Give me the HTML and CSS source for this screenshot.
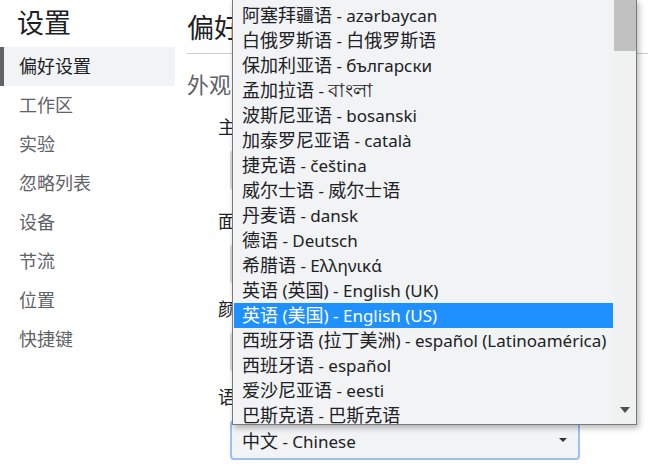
FILE: index.html
```html
<!DOCTYPE html>
<html lang="zh-CN">
<head>
<meta charset="utf-8">
<title>设置</title>
<link rel="stylesheet" href="styles.css">
</head>
<body>
<div class="app">
  <aside class="sidebar">
    <div class="sidebar-title">设置</div>
    <nav class="nav">
      <div class="nav-item active">偏好设置</div>
      <div class="nav-item">工作区</div>
      <div class="nav-item">实验</div>
      <div class="nav-item">忽略列表</div>
      <div class="nav-item">设备</div>
      <div class="nav-item">节流</div>
      <div class="nav-item">位置</div>
      <div class="nav-item">快捷键</div>
    </nav>
  </aside>
  <main class="content">
    <div class="content-header"><h2 class="content-title">偏好设置</h2></div>
    <h3 class="section-title">外观</h3>
    <div class="setting first">
      <div class="setting-label">主题：</div>
      <div class="select"><span>系统偏好设置</span><span class="caret"></span></div>
    </div>
    <div class="setting">
      <div class="setting-label">面板布局：</div>
      <div class="select"><span>自动</span><span class="caret"></span></div>
    </div>
    <div class="setting">
      <div class="setting-label">颜色格式：</div>
      <div class="select"><span>按原样设置</span><span class="caret"></span></div>
    </div>
    <div class="setting">
      <div class="setting-label">语言：</div>
      <div class="select focused"><span><span class="zh">中文</span> - Chinese</span><span class="caret"></span></div>
    </div>
  </main>
</div>

<div class="dropdown">
  <div class="dropdown-list">
    <div class="option"><span class="zh">阿塞拜疆语</span> - azərbaycan</div>
    <div class="option"><span class="zh">白俄罗斯语</span> - <span class="zh">白俄罗斯语</span></div>
    <div class="option"><span class="zh">保加利亚语</span> - български</div>
    <div class="option"><span class="zh">孟加拉语</span> - <span class="bn">বাংলা</span></div>
    <div class="option"><span class="zh">波斯尼亚语</span> - bosanski</div>
    <div class="option"><span class="zh">加泰罗尼亚语</span> - català</div>
    <div class="option"><span class="zh">捷克语</span> - čeština</div>
    <div class="option"><span class="zh">威尔士语</span> - <span class="zh">威尔士语</span></div>
    <div class="option"><span class="zh">丹麦语</span> - dansk</div>
    <div class="option"><span class="zh">德语</span> - Deutsch</div>
    <div class="option"><span class="zh">希腊语</span> - Ελληνικά</div>
    <div class="option"><span class="zh">英语</span> (<span class="zh">英国</span>) - English (UK)</div>
    <div class="option selected"><span class="zh">英语</span> (<span class="zh">美国</span>) - English (US)</div>
    <div class="option"><span class="zh">西班牙语</span> (<span class="zh">拉丁美洲</span>) - español (Latinoamérica)</div>
    <div class="option"><span class="zh">西班牙语</span> - español</div>
    <div class="option"><span class="zh">爱沙尼亚语</span> - eesti</div>
    <div class="option"><span class="zh">巴斯克语</span> - <span class="zh">巴斯克语</span></div>
  </div>
  <div class="scrollbar">
    <div class="scroll-thumb"></div>
    <div class="scroll-track"></div>
    <div class="scroll-down"><span class="scroll-arrow"></span></div>
  </div>
</div>
</body>
</html>
```
FILE: styles.css
```css
html, body {
  margin: 0;
  padding: 0;
  background: #ffffff;
  overflow: hidden;
}
body {
  width: 648px;
  height: 472px;
  position: relative;
  font-family: "Noto Sans", "Noto Sans CJK SC", sans-serif;
  color: #202124;
}
.zh {
  font-size: 18px;
}
.bn {
  font-size: 19px;
}
.app {
  display: flex;
  height: 472px;
}
.sidebar {
  width: 175px;
  flex: none;
}
.sidebar-title {
  height: 47px;
  line-height: 46px;
  padding-left: 17px;
  font-size: 27px;
  color: #202124;
}
.nav {
  display: flex;
  flex-direction: column;
}
.nav-item {
  height: 39px;
  line-height: 39px;
  padding-left: 19px;
  font-size: 18px;
  color: #5f6368;
}
.nav-item.active {
  background: #f1f3f4;
  color: #202124;
  box-shadow: inset 4px 0 0 #5f6368;
}
.content {
  flex: 1;
  padding-left: 12px;
  min-width: 0;
}
.content-header {
  height: 53px;
  border-bottom: 1px solid #cbcdd1;
}
.content-title {
  margin: 0;
  font-weight: normal;
  font-size: 27px;
  line-height: 32px;
  padding-top: 12px;
  white-space: nowrap;
}
.section-title {
  margin: 16px 0 0 0;
  font-weight: normal;
  font-size: 22px;
  line-height: 28px;
  color: #5f6368;
}
.setting {
  margin-left: 31px;
  margin-bottom: 13px;
}
.setting.first {
  margin-top: 17px;
  margin-bottom: 19px;
}
.setting-label {
  font-size: 18px;
  line-height: 25px;
  height: 25px;
  white-space: nowrap;
}
.select {
  margin-top: 10px;
  margin-left: 12px;
  height: 36px;
  border: 2px solid #dadce0;
  border-radius: 4px;
  background: #f1f3f4;
  display: flex;
  align-items: center;
  justify-content: space-between;
  padding: 0 10px;
  box-sizing: content-box;
  font-size: 17px;
  width: 326px;
}
.select.focused {
  border-color: #9cc0f4;
}
.caret {
  width: 0;
  height: 0;
  border-left: 4px solid transparent;
  border-right: 4px solid transparent;
  border-top: 4px solid #333;
  margin-right: 1px;
}

/* open select popup */
.dropdown {
  position: absolute;
  left: 232px;
  top: -1px;
  width: 403px;
  height: 424px;
  border: 1px solid #7a7a7a;
  background: #f1f3f4;
  box-shadow: 2px 3px 6px rgba(0, 0, 0, 0.28);
  display: flex;
  overflow: hidden;
}
.dropdown-list {
  flex: 1;
  padding-top: 3px;
  overflow: hidden;
}
.option {
  height: 25px;
  line-height: 25px;
  padding-left: 9px;
  font-size: 17px;
  color: #202124;
  white-space: nowrap;
}
.option.selected {
  background: #1e90ff;
  color: #ffffff;
  margin: 0 1px;
  padding-left: 8px;
}
.scrollbar {
  width: 22px;
  flex: none;
  display: flex;
  flex-direction: column;
  background: #f0f1f1;
}
.scroll-thumb {
  height: 51px;
  background: #c1c1c1;
}
.scroll-track {
  flex: 1;
}
.scroll-down {
  height: 22px;
  display: flex;
  justify-content: center;
  align-items: flex-start;
  padding-top: 5px;
  box-sizing: border-box;
}
.scroll-arrow {
  width: 0;
  height: 0;
  border-left: 5px solid transparent;
  border-right: 5px solid transparent;
  border-top: 6px solid #505050;
}
```
